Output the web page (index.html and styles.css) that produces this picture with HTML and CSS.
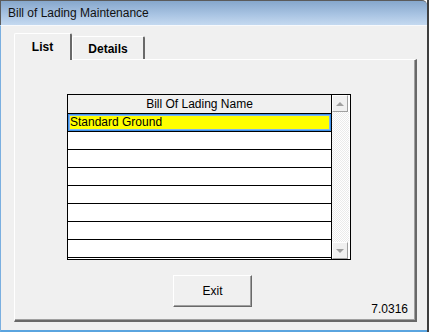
FILE: index.html
```html
<!DOCTYPE html>
<html lang="en">
<head>
    <meta charset="UTF-8">
    <title>Bill of Lading Maintenance</title>
    <link rel="stylesheet" href="styles.css">
</head>
<body>
    <div class="window">
        <div class="titlebar">Bill of Lading Maintenance</div>
        <div class="client">
            <div class="tabs">
                <div class="tab active">List</div>
                <div class="tab">Details</div>
            </div>
            <div class="panel">
                <div class="grid">
                    <div class="grid-body">
                        <div class="grid-head">Bill Of Lading Name</div>
                        <div class="row selected">Standard Ground</div>
                        <div class="row"></div>
                        <div class="row"></div>
                        <div class="row"></div>
                        <div class="row"></div>
                        <div class="row"></div>
                        <div class="row"></div>
                        <div class="row"></div>
                    </div>
                    <div class="scroll">
                        <div class="scroll-btn"><span class="arrow up"></span></div>
                        <div class="scroll-track"></div>
                        <div class="scroll-btn"><span class="arrow down"></span></div>
                    </div>
                </div>
                <div class="footer">
                    <button type="button" class="btn">Exit</button>
                    <div class="version">7.0316</div>
                </div>
            </div>
        </div>
    </div>
</body>
</html>
```

FILE: styles.css
```css
:root {
    --face: #f0f0f0;
    --shadow: #a0a0a0;
    --dark: #696969;
}
html, body {
    margin: 0;
    padding: 0;
    background: #fff;
    font-family: 'Liberation Sans', Arial, sans-serif;
    font-size: 12px;
    color: #000;
}
.window {
    width: 427px;
    height: 332px;
    display: flex;
    flex-direction: column;
    border-right: 2px solid #3e3e3e;
}
.titlebar {
    height: 24px;
    line-height: 24px;
    padding-left: 7px;
    border-top: 1px solid #5b5b5b;
    border-left: 1px solid #5b5b5b;
    background: linear-gradient(#86a7cc 0%, #a8c3e2 55%, #c4d9f0 100%);
    color: #111;
    border-top-right-radius: 5px;
}
.client {
    flex: 1;
    background: var(--face);
    border-top: 1px solid #f7f9fc;
    border-left: 1px solid #7aafe0;
    border-bottom: 2px solid #5aa4df;
    padding: 7px 0 0 13px;
}
.tabs {
    display: flex;
    align-items: flex-end;
    height: 26px;
}
.tab {
    height: 23px;
    width: 73px;
    box-sizing: border-box;
    padding-top: 5px;
    text-align: center;
    font-weight: bold;
    line-height: 14px;
    background: var(--face);
    border-top: 1px solid #fff;
    border-left: 1px solid #fff;
    border-right: 2px solid var(--dark);
    border-radius: 2px 2px 0 0;
}
.tab.active {
    width: 58px;
    height: 27px;
    margin-bottom: -1px;
    padding-top: 6px;
    position: relative;
    z-index: 1;
}
.panel {
    width: 403px;
    height: 263px;
    box-sizing: border-box;
    border-top: 1px solid #fff;
    border-left: 1px solid #fff;
    border-right: 2px solid var(--dark);
    border-bottom: 2px solid var(--dark);
    box-shadow: inset -1px -1px 0 var(--shadow);
    display: flex;
    flex-direction: column;
}
.grid {
    margin: 34px 0 0 52px;
    width: 284px;
    height: 166px;
    box-sizing: border-box;
    border: 1px solid #000;
    background: #fff;
    display: flex;
}
.grid-body {
    width: 263px;
    border-right: 1px solid #000;
}
.grid-head {
    height: 18px;
    line-height: 18px;
    text-align: center;
    background: var(--face);
    border-bottom: 1px solid #000;
}
.row {
    height: 17px;
    line-height: 17px;
    border-bottom: 1px solid #000;
    padding-left: 2px;
}
.row.selected {
    background: #ffff00;
    box-shadow: inset 0 0 0 1px #3d8fe8, inset 0 0 0 2px #7fb6f0;
}
.scroll {
    width: 17px;
    display: flex;
    flex-direction: column;
}
.scroll-track {
    flex: 1;
    background: repeating-conic-gradient(#fff 0 25%, #ebebeb 0 50%) 0 0 / 2px 2px;
}
.scroll-btn {
    height: 17px;
    width: 16px;
    box-sizing: border-box;
    background: var(--face);
    border-top: 1px solid #fff;
    border-left: 1px solid #fff;
    border-right: 1px solid var(--shadow);
    border-bottom: 1px solid var(--shadow);
    display: flex;
    align-items: center;
    justify-content: center;
}
.arrow {
    width: 0;
    height: 0;
    border-left: 4px solid transparent;
    border-right: 4px solid transparent;
}
.arrow.up {
    border-bottom: 4px solid #a0a0a0;
}
.arrow.down {
    border-top: 4px solid #a0a0a0;
}
.footer {
    flex: 1;
    display: flex;
    align-items: flex-start;
    padding-right: 7px;
}
.btn {
    margin: 15px 0 0 158px;
    width: 79px;
    height: 32px;
    padding: 0;
    font-family: inherit;
    font-size: 12px;
    color: #000;
    background: var(--face);
    border-top: 1px solid #fff;
    border-left: 1px solid #fff;
    border-right: 1px solid var(--dark);
    border-bottom: 1px solid var(--dark);
    box-shadow: inset -1px -1px 0 var(--shadow);
}
.version {
    margin: 42px 0 0 auto;
    line-height: 14px;
}
```
